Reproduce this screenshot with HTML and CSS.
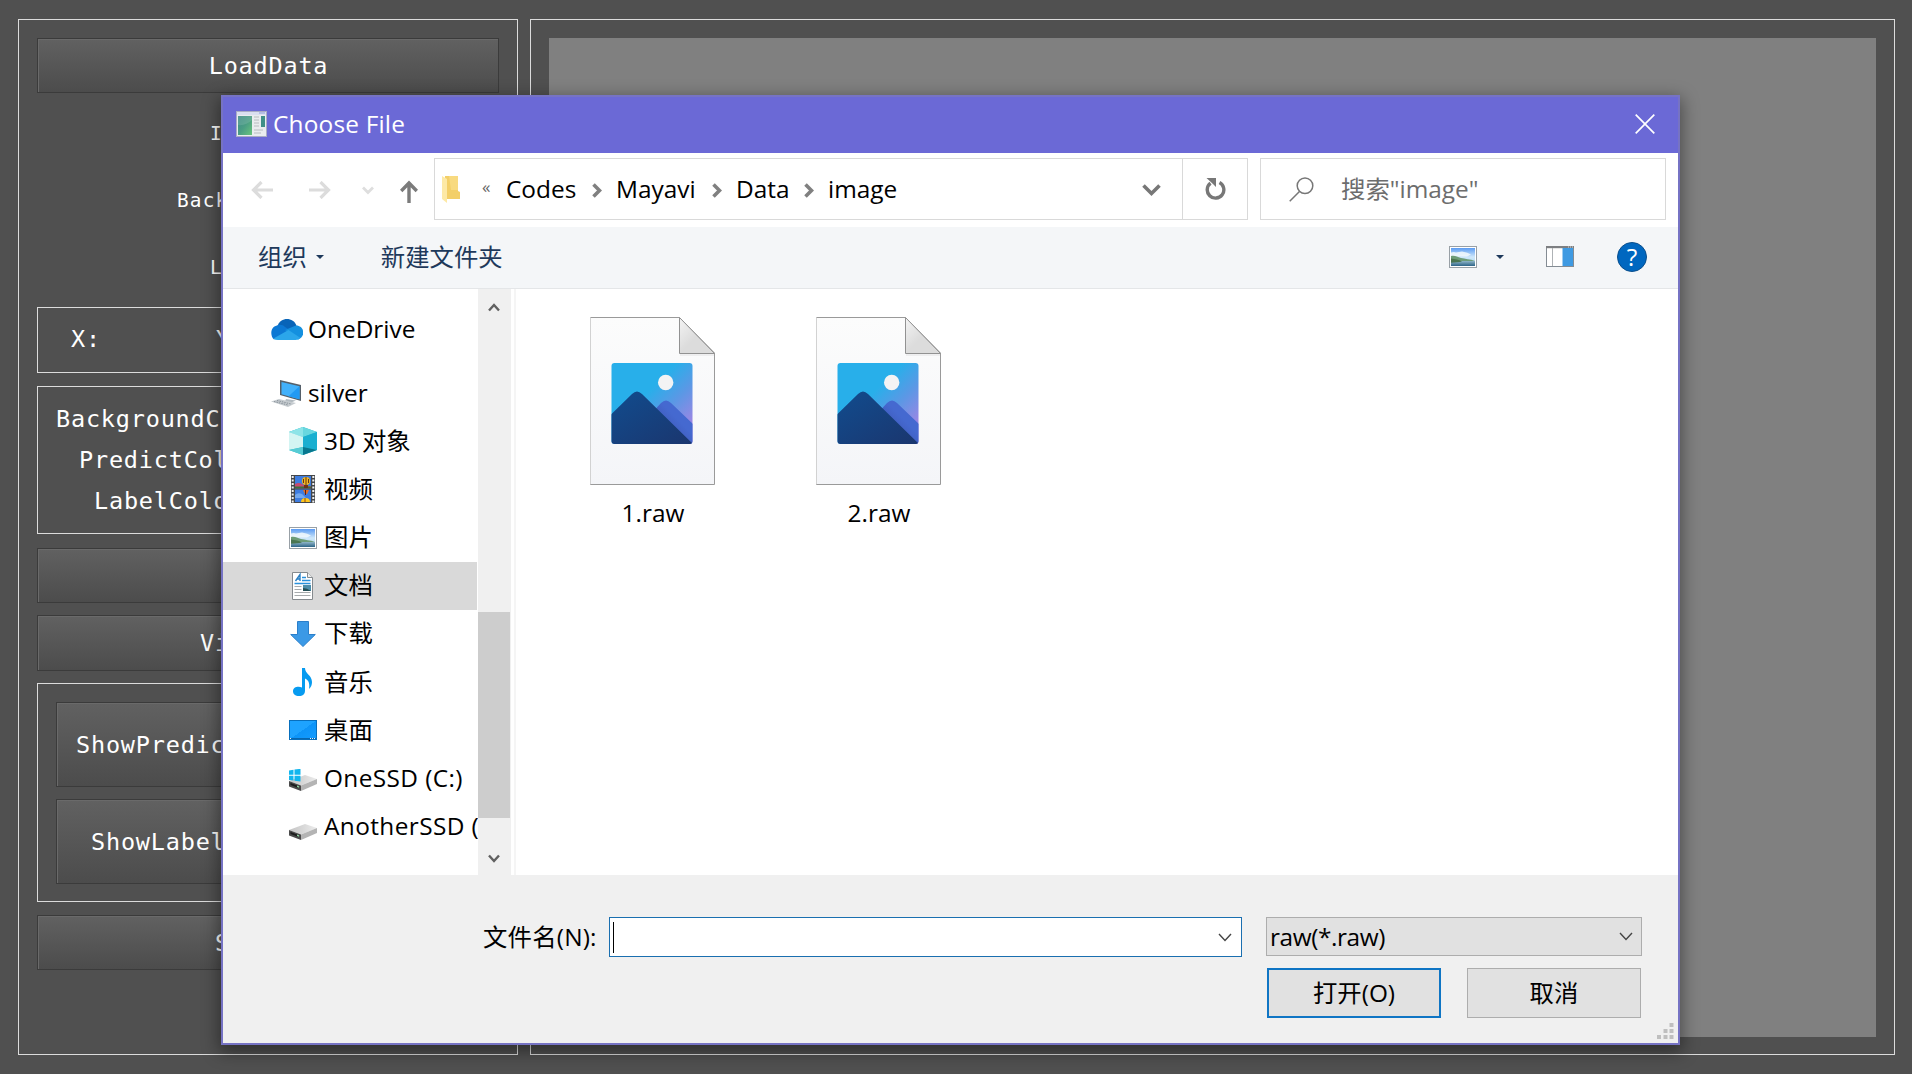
FILE: index.html
```html
<!DOCTYPE html>
<html lang="zh-CN">
<head>
<meta charset="utf-8">
<title>Choose File</title>
<link rel="stylesheet" href="styles.css">
</head>
<body>
<svg class="defs" width="0" height="0" aria-hidden="true">
  <defs>
    <linearGradient id="sky" x1="0" y1="0" x2="0" y2="1"><stop offset="0" stop-color="#5b9bf2"/><stop offset=".5" stop-color="#cfe8fb"/><stop offset="1" stop-color="#a9d3ec"/></linearGradient>
    <linearGradient id="sea" x1="0" y1="0" x2="0" y2="1"><stop offset="0" stop-color="#8fb5c8"/><stop offset="1" stop-color="#2d6487"/></linearGradient>
    <linearGradient id="paper" x1="0" y1="0" x2="0" y2="1"><stop offset="0" stop-color="#fcfcfc"/><stop offset="1" stop-color="#f4f5f8"/></linearGradient>
    <linearGradient id="fold" x1="0" y1="0" x2="1" y2="1"><stop offset="0" stop-color="#f4f4f4"/><stop offset=".5" stop-color="#dcdcdc"/></linearGradient>
    <linearGradient id="photo" x1="0" y1="0" x2="1" y2="1"><stop offset=".4" stop-color="#28afea"/><stop offset=".62" stop-color="#5b98e5"/><stop offset=".85" stop-color="#9a86e4"/></linearGradient>
    <linearGradient id="peak" x1="0" y1="0" x2="1" y2="1"><stop offset="0" stop-color="#114c8e"/><stop offset="1" stop-color="#1b356d"/></linearGradient>
    <linearGradient id="hill" x1="1" y1="0" x2="0" y2="1"><stop offset=".4" stop-color="#4569d0"/><stop offset=".8" stop-color="#3a50ac"/></linearGradient>
    <linearGradient id="drivetop" x1="0" y1="0" x2="1" y2="0"><stop offset="0" stop-color="#c4c4c4"/><stop offset="1" stop-color="#ececec"/></linearGradient>
    <linearGradient id="screen" x1="0" y1="0" x2="1" y2="1"><stop offset=".5" stop-color="#1ea3ff"/><stop offset=".5" stop-color="#0d94f8"/><stop offset="1" stop-color="#149cff"/></linearGradient>
    <linearGradient id="app" x1="0" y1="0" x2="1" y2="1"><stop offset="0" stop-color="#3d8a86"/><stop offset=".5" stop-color="#4a9d84"/><stop offset="1" stop-color="#69c47c"/></linearGradient>
    <clipPath id="photoclip"><rect x="21.500" y="46" width="81" height="81" rx="3"/></clipPath>
    <symbol id="landscape" viewBox="0 0 28 22">
      <rect x=".5" y=".5" width="27" height="21" fill="#fff" stroke="#98a0a6"/>
      <rect x="2" y="2" width="24" height="18" fill="url(#sky)"/>
      <path d="M2 6.500q3-1 5 0l6-1q6 1 9 3l-4 2H2z" fill="#f3f9fd" opacity=".85"/>
      <path d="M2 15h24v5H2z" fill="url(#sea)"/>
      <path d="M2 10c4-1 6 1 10 2s9 1 14 3H2z" fill="#6d9c78"/>
      <path d="M2 12.500c4 .5 8 1 11 3-3 .8-7 .8-11 1.300z" fill="#4a7550"/>
    </symbol>
    <symbol id="drive" viewBox="0 0 28 16">
      <path d="M0 6 16 0l12 4-16 6.500z" fill="url(#drivetop)"/>
      <path d="M0 6l12 4.500V16L0 11.500z" fill="#4a4a4a"/>
      <path d="M12 10.500 28 4v5L12 16z" fill="#b4b4b4"/>
      <path d="M1.500 8l8 3v2l-8-3z" fill="#1c1c1c"/><path d="M8 12l2 .7v-1.500l-2-.7z" fill="#8fd0a0"/>
    </symbol>
    <symbol id="picturefile" viewBox="0 0 126 168">
      <path d="M.5.500H89.500L124.500 36V167.500H.5z" fill="url(#paper)" stroke="#9a9a9a"/>
      <path d="M.5.500V167" stroke="#d2d2d2"/>
      <path d="M89.500.500 124.500 36.500H89.500z" fill="url(#fold)" stroke="#929292"/>
      <path d="M90 38h34" stroke="#e2e2e4"/>
      <g clip-path="url(#photoclip)">
        <path d="M21 46h82v82H21z" fill="url(#photo)"/>
        <circle cx="75.700" cy="65.500" r="7.700" fill="#f3f3f4"/>
        <path d="M60 98 71 86q5-5 10 0l24 23v20H60z" fill="url(#hill)"/>
        <path d="M21 97.500 42 77q5-5 10 0l53 52H21z" fill="url(#peak)"/>
      </g>
    </symbol>
  </defs>
</svg>

<main class="app">
  <section class="panel controls">
    <div class="push push-load">LoadData</div>
    <div class="caption caption-i">I</div>
    <div class="caption caption-b">Back</div>
    <div class="caption caption-l">L</div>
    <div class="group coords"><span>X:</span><span>Y</span></div>
    <div class="group colors">
      <div class="color-bg">BackgroundC</div>
      <div class="color-predict">PredictCol</div>
      <div class="color-label">LabelColo</div>
    </div>
    <div class="push push-blank"></div>
    <div class="push push-view">Vi</div>
    <div class="group toggles">
      <div class="push tall show-predict">ShowPredic</div>
      <div class="push tall show-label">ShowLabel</div>
    </div>
    <div class="push push-save">S</div>
  </section>
  <section class="panel viewer"><div class="canvas"></div></section>
</main>

<div class="dialog">
  <header class="titlebar">
    <svg class="app-icon" width="31" height="26" viewBox="0 0 31 26">
      <rect x=".5" y=".5" width="30" height="25" fill="#e9ecef" stroke="#a9adc4"/>
      <path d="M1 1h29v3H1z" fill="#dadff0"/><path d="M23 2h6" stroke="#8d9bd8"/>
      <rect x="2" y="5" width="14" height="19" fill="url(#app)"/><path d="M2 14Q10 15 16 9v-4H2z" fill="#fff" opacity=".12"/>
      <path d="M18 6h5M18 9h5M18 12h5M18 15h5M18 19h9M18 22h7" stroke="#b8bcc0"/>
      <rect x="25" y="5" width="4" height="11" fill="#3f8f88"/>
    </svg>
    <span class="title">Choose File</span>
    <svg class="close" width="20" height="20" viewBox="0 0 20 20"><path d="M.7.700l18.600 18.600M19.300.700.700 19.300" stroke="#fff" stroke-width="1.700"/></svg>
  </header>

  <nav class="navbar">
    <svg class="back" width="22" height="18" viewBox="0 0 22 18" fill="none" stroke="#dcdcdc" stroke-width="3.200"><path d="M22 9H3M10.500 1 2.500 9l8 8"/></svg>
    <svg class="forward" width="22" height="18" viewBox="0 0 22 18" fill="none" stroke="#dcdcdc" stroke-width="3.200"><path d="M0 9h19M11.500 1l8 8-8 8"/></svg>
    <svg class="recent" width="12" height="9" viewBox="0 0 12 9" fill="none" stroke="#dedede" stroke-width="2.800"><path d="M1 1.500l5 5 5-5"/></svg>
    <svg class="up" width="18" height="23" viewBox="0 0 18 23" fill="none" stroke="#7b7b7b" stroke-width="3.400"><path d="M9 23V3M1.200 11 9 3l7.800 8"/></svg>
    <div class="address">
      <svg class="folder" width="18" height="27" viewBox="0 0 18 27"><path d="M3 0h13v15l2 1v7H3z" fill="#f3cf68"/><path d="M7 0h9v14H9z" fill="#f8da80"/><path d="M0 0l5 3v24l-5-4z" fill="#fde9a6"/></svg>
      <span class="more">«</span>
      <span class="crumb crumb-codes">Codes</span>
      <svg class="sep" width="10" height="15" viewBox="0 0 10 15"><path d="M1.500 1.500l6 6-6 6" fill="none" stroke="#808080" stroke-width="3.600"/></svg>
      <span class="crumb crumb-mayavi">Mayavi</span>
      <svg class="sep" width="10" height="15" viewBox="0 0 10 15"><path d="M1.500 1.500l6 6-6 6" fill="none" stroke="#808080" stroke-width="3.600"/></svg>
      <span class="crumb crumb-data">Data</span>
      <svg class="sep" width="10" height="15" viewBox="0 0 10 15"><path d="M1.500 1.500l6 6-6 6" fill="none" stroke="#808080" stroke-width="3.600"/></svg>
      <span class="crumb crumb-image">image</span>
      <svg class="history" width="19" height="13" viewBox="0 0 19 13"><path d="M1.500 1.500l8 8 8-8" fill="none" stroke="#777" stroke-width="3.600"/></svg>
      <span class="refresh"><svg width="21" height="22" viewBox="0 0 21 22"><path d="M14.500 4.500A8.300 8.300 0 1 1 5.500 5.200" fill="none" stroke="#777" stroke-width="3.400"/><path d="M1.500 0h9.500v9L8 6z" fill="#777"/></svg></span>
    </div>
    <div class="search">
      <svg width="25" height="25" viewBox="0 0 25 25" fill="none" stroke="#777" stroke-width="1.500"><circle cx="16" cy="8.700" r="7.800"/><path d="M10.700 14.300.700 24.300"/></svg>
      <span>搜索"image"</span>
    </div>
  </nav>

  <div class="toolbar">
    <span class="organize">组织</span>
    <i class="caret"></i>
    <span class="newfolder">新建文件夹</span>
    <svg class="view" width="28" height="22"><use href="#landscape"/></svg>
    <i class="caret"></i>
    <svg class="pane" width="28" height="21" viewBox="0 0 28 21"><rect x=".5" y=".5" width="27" height="20" fill="#fff" stroke="#848c94"/><path d="M0 0h28v2.200H0z" fill="#7d7f82"/><path d="M22 1h5" stroke="#ddd" stroke-dasharray="1 1"/><path d="M6.500 2v18" stroke="#aeb2b5"/><path d="M16.500 2H27v18H16.500z" fill="#3f9ae2"/></svg>
    <span class="help">?</span>
  </div>

  <div class="browser">
    <div class="tree">
      <div class="node root first"><span class="glyph"><svg width="32" height="21" viewBox="0 0 32 21"><path d="M6 8C8 2 12 0 16 0s8 2 9.500 7L17 12z" fill="#0864b8"/><path d="M6 6.500C9 5 12 6 14 8l7 4.500L3 20.500C-1 17-1 8 6 6.500z" fill="#0c78d4"/><path d="M25 6.500c9 0 9.500 12 2 14L14 11z" fill="#1490df"/><path d="M2.500 19.500 17.500 11l12 8q-1.500 2-5 2H7q-3 0-4.500-1.500z" fill="#2ba6ea"/></svg></span>OneDrive</div>
      <div class="node root"><span class="glyph pc"><svg width="31" height="27" viewBox="0 0 31 27"><path d="M9 0l21 5v16L9 15z" fill="#55606a"/><path d="M10.500 2 28.500 6.300v12.900l-18-5z" fill="#42b1fb"/><path d="M28.500 6.300v12.900l-11-3z" fill="#229af3"/><path d="M15 19l10 1.500-6 2.500-5-1.500z" fill="#b2bac0"/><path d="M0 21.500l8-2.500 17 4-8 4z" fill="#c5cbcf"/><path d="M3 21.500l14 3.500M6 20.500l14 3.500" stroke="#89929a" stroke-dasharray="1.500 1"/></svg></span>silver</div>
      <div class="node"><span class="glyph"><svg width="28" height="28" viewBox="0 0 28 28"><path d="M14 0l14 5v18l-14 5L0 23V5z" fill="#25b9cb"/><path d="M0 5l14-5 14 5-14 5z" fill="#68d7df"/><path d="M14 0v10L0 5z" fill="#8de4e8"/><path d="M0 5l14 5v10L0 23z" fill="#d3f5f3"/><path d="M0 23l14-3v8z" fill="#57ccd4"/><path d="M14 10l14-5v18l-14-3z" fill="#1aafd0"/><path d="M14 20l14 3-14 5z" fill="#08788f"/></svg></span>3D 对象</div>
      <div class="node"><span class="glyph"><svg width="24" height="28" viewBox="0 0 24 28"><path d="M0 0h24v28H0z" fill="#44474a"/><path d="M1.700 1v27M22.300 1v27" stroke="#f0f0f0" stroke-width="2" stroke-dasharray="2 1.500"/><path d="M4 1h16v12.300H4zM4 14.500h16V27H4z" fill="#3e7de0"/><path d="M4 9q4-2 7 0t9 2v2.300H4z" fill="#c8486f"/><path d="M4 20q3-3 7-1l4 4H4z" fill="#72a8ee"/><path d="M4 11.500h16v1.800H4z" fill="#37733c"/><circle cx="15" cy="6" r="4" fill="#f3b61f"/><path d="M15 2v8M12.500 4v4M17.500 4v4" stroke="#623413"/><path d="M13 10h4v3h-4z" fill="#6b3216"/><path d="M12 15h6l-2 4h-2z" fill="#e56d22"/><path d="M14.500 15v5" stroke="#54201a"/><path d="M10 27q0-4 4.500-4t4.500 4z" fill="#ffc61d"/><path d="M14 23v4" stroke="#8e4b10"/></svg></span>视频</div>
      <div class="node"><span class="glyph"><svg width="28" height="22"><use href="#landscape"/></svg></span>图片</div>
      <div class="node selected"><span class="glyph doc"><svg width="21" height="28" viewBox="0 0 21 28"><path d="M.5.500h15l5 5v22H.5z" fill="#fff" stroke="#858a8e"/><path d="M15.500.500v5h5" fill="#eee" stroke="#858a8e"/><path d="M3.500 9 8 2.500V9M5 7h3" fill="none" stroke="#287fc4" stroke-width="1.400"/><path d="M10 5.500h4M10 8.500h8.500M2.500 11.500h16" stroke="#2891dc" stroke-width="1.300"/><path d="M2.500 14.500h7M2.500 17.500h7M2.500 20.500h16M2.500 23.500h16" stroke="#a7abad"/><path d="M11 13h8v6h-8z" fill="#4c8daa"/><path d="M11 16q4 0 8 3h-8z" fill="#244f55"/></svg></span>文档</div>
      <div class="node"><span class="glyph"><svg width="26" height="26" viewBox="0 0 26 26"><path d="M7.500.500h11v13h6.800L13 25.500.7 13.500h6.800z" fill="#3b99e6" stroke="#2b7fca"/></svg></span>下载</div>
      <div class="node"><span class="glyph"><svg width="20" height="28" viewBox="0 0 20 28"><path d="M9 0h3c0 6 7 7 7 14 0 3-1 5-3 7 1-7-1-9-4-10.500V23c0 7-12 6.500-12 .5C0 19 5 18 9 19.500z" fill="#079bf0"/></svg></span>音乐</div>
      <div class="node"><span class="glyph"><svg width="28" height="20" viewBox="0 0 28 20"><rect x=".5" y=".5" width="27" height="19" fill="url(#screen)" stroke="#086fbd"/><path d="M1 18.500h26" stroke="#0867b0"/><path d="M1 18.500h2M21 18.500h6" stroke="#e9f6ff" stroke-dasharray="1 1"/></svg></span>桌面</div>
      <div class="node wide"><span class="glyph cdrive"><svg width="28" height="22" viewBox="0 0 28 22"><svg y="6" width="28" height="16"><use href="#drive"/></svg><path d="M0 1.500l4.500-.7v4.900H0zM5.500.600 11.500-.200v5.900h-6zM0 6.700h4.500v4.900L0 11zM5.500 6.700h6v5.900l-6-.8z" fill="#12b6ee"/></svg></span>OneSSD (C:)</div>
      <div class="node wide"><span class="glyph low"><svg width="28" height="16"><use href="#drive"/></svg></span>AnotherSSD (</div>
    </div>
    <div class="scrollbar">
      <svg width="12" height="10" viewBox="0 0 12 10"><path d="M1 8.500l5-5.500 5 5.500" fill="none" stroke="#606060" stroke-width="2.400"/></svg>
      <div class="thumb"></div>
      <svg width="12" height="10" viewBox="0 0 12 10"><path d="M1 1.500 6 7l5-5.500" fill="none" stroke="#606060" stroke-width="2.400"/></svg>
    </div>
    <div class="splitter"></div>
    <div class="files">
      <div class="file"><svg width="126" height="168"><use href="#picturefile"/></svg><span>1.raw</span></div>
      <div class="file"><svg width="126" height="168"><use href="#picturefile"/></svg><span>2.raw</span></div>
    </div>
  </div>

  <footer class="footer">
    <div class="name-row">
      <label class="name-label">文件名(N):</label>
      <div class="name-input"><i class="cursor"></i><svg width="14" height="9" viewBox="0 0 14 9"><path d="M1 1l6 6.500L13 1" fill="none" stroke="#444" stroke-width="1.400"/></svg></div>
      <div class="filter"><span>raw(*.raw)</span><svg width="14" height="9" viewBox="0 0 14 9"><path d="M1 1l6 6.500L13 1" fill="none" stroke="#444" stroke-width="1.400"/></svg></div>
    </div>
    <div class="actions">
      <div class="action primary">打开(O)</div>
      <div class="action">取消</div>
    </div>
    <svg class="grip" width="17" height="17" viewBox="0 0 17 17"><path d="M12.500 0h4v4h-4zM6.500 6h4v4h-4zM12.500 6h4v4h-4zM0 12h4v4H0zM6.500 12h4v4h-4zM12.500 12h4v4h-4z" fill="#bfbfbf"/></svg>
  </footer>
</div>
</body>
</html>
```
FILE: styles.css
```css
* { box-sizing: border-box; }
html, body { height: 100%; }
body {
  margin: 0;
  overflow: hidden;
  background: #505050;
  font: 24.4px/32px "Open Sans", "Noto Sans CJK SC", sans-serif;
  color: #000;
}
svg { display: block; flex: none; }
.defs { position: absolute; }

/* main window */
.app {
  display: flex;
  gap: 12px;
  height: 1074px;
  padding: 19px 17px 19px 18px;
  font: 23.5px/30px "DejaVu Sans Mono", monospace;
  letter-spacing: 0.8px;
  color: #fff;
}
.panel { border: 1px solid #dcdcdc; padding: 18px; }
.controls { width: 500px; display: flex; flex-direction: column; white-space: nowrap; }
.viewer { flex: 1; }
.canvas { height: 999px; background: #808080; }
.push {
  flex: none;
  height: 55px;
  border: 1px solid #3b3b3b;
  background: linear-gradient(#616161, #4c4c4c);
  box-shadow: inset 1px 1px #6a6a6a;
  line-height: 54px;
  text-align: center;
}
.push-load { padding-left: 1px; }
.caption { font-size: 19.4px; letter-spacing: 1.2px; height: 67px; line-height: 67px; }
.caption-i { padding-left: 173px; margin-top: 7px; }
.caption-b { padding-left: 140px; }
.caption-l { padding-left: 173px; }
.group { border: 1px solid #dcdcdc; }
.coords { height: 66px; margin-top: 6px; padding: 16px 0 0 33px; display: flex; gap: 115px; }
.colors { height: 148px; margin-top: 13px; padding-top: 12px; line-height: 41px; }
.color-bg { padding-left: 18px; }
.color-predict { padding-left: 41px; }
.color-label { padding-left: 56px; }
.push-blank { margin-top: 14px; }
.push-view { height: 56px; margin-top: 12px; text-align: left; padding-left: 162px; }
.toggles { height: 219px; margin-top: 12px; padding: 18px; display: flex; flex-direction: column; gap: 12px; }
.tall { height: 85px; line-height: 84px; text-align: left; }
.show-predict { padding-left: 19px; }
.show-label { padding-left: 34px; }
.push-save { margin-top: 13px; text-align: left; padding-left: 177px; }

/* file dialog window */
.dialog {
  position: absolute;
  left: 221px;
  top: 95px;
  width: 1459px;
  height: 950px;
  border: 2px solid #7673c4;
  background: #fff;
  box-shadow: 0 5px 16px 2px rgba(0, 0, 0, 0.42);
  display: flex;
  flex-direction: column;
}
.titlebar { height: 56px; background: #6b69d6; display: flex; align-items: center; padding: 0 23px 2px 13px; color: #fff; }
.title { margin: 0 auto 1px 6px; letter-spacing: 0.2px; }
.navbar { height: 74px; display: flex; align-items: center; padding: 0 0 2px 28px; }
.back, .recent { margin-top: 2px; }
.forward { margin: 2px 0 0 36px; }
.recent { margin-left: 31px; }
.up { margin: 5px 16px 0 26px; }
.address { width: 814px; height: 62px; border: 1px solid #d9d9d9; display: flex; align-items: center; padding-left: 7px; }
.more { font-size: 17px; color: #666; margin: 0 0 5px 22px; width: 24px; }
.crumb { white-space: nowrap; }
.sep { margin-top: 2px; }
.crumb-codes { width: 86px; }
.crumb-mayavi { width: 96px; margin-left: 14px; }
.crumb-data { width: 68px; margin-left: 14px; }
.crumb-image { margin-left: 14px; }
.history { margin: 3px 21px 0 auto; }
.refresh { width: 65px; height: 60px; border-left: 1px solid #d9d9d9; display: flex; align-items: center; justify-content: center; }
.search { width: 406px; height: 62px; margin-left: 12px; border: 1px solid #d9d9d9; display: flex; align-items: center; gap: 27px; padding-left: 28px; color: #6d6d6d; }
.toolbar { height: 62px; background: #f4f6f8; border-bottom: 1px solid #e4e6e8; display: flex; align-items: center; padding: 0 31px 2px 35px; color: #1e395b; }
.caret { border: 4px solid transparent; border-top-color: #1e395b; border-bottom: 0; }
.organize + .caret { margin-left: 9px; }
.newfolder { margin-left: 57px; margin-right: auto; }
.view { margin-right: 19px; }
.pane { margin: 0 43px 0 42px; }
.help { width: 30px; height: 30px; border-radius: 50%; background: #0067c0; border: 1px solid #0b4f8c; color: #fff; line-height: 27px; text-align: center; }

.browser { height: 586px; display: flex; }
.tree { width: 255px; overflow: hidden; white-space: nowrap; padding-top: 17px; }
.node { width: 254px; height: 48.15px; display: flex; align-items: center; padding: 0 0 1px 60px; }
.node.root { padding-left: 44px; }
.node.first { margin-bottom: 15px; padding-bottom: 3px; }
.wide { letter-spacing: 0.4px; }
.selected { background: #d9d9d9; }
.glyph { flex: none; width: 40px; padding-top: 1px; margin-right: 1px; display: flex; justify-content: center; }
.pc { padding-right: 2px; }
.doc { padding-right: 1px; }
.cdrive { padding-top: 5px; }
.low { padding-top: 12px; }
.scrollbar { width: 33px; background: #f0f0f0; display: flex; flex-direction: column; align-items: center; padding: 13px 1px 11px 0; }
.thumb { width: 32px; height: 206px; margin: 300px 0 auto; background: #cdcdcd; }
.splitter { width: 5px; border-right: 2px solid #f5f5f5; }
.files { flex: 1; display: flex; gap: 100px; padding: 28px 0 0 74px; }
.file { width: 126px; display: flex; flex-direction: column; align-items: center; gap: 12px; }

.footer { flex: 1; background: #f0f0f0; position: relative; padding-top: 42px; }
.name-row { display: flex; padding-left: 260px; }
.name-label { width: 126px; white-space: nowrap; padding-top: 4px; letter-spacing: 0.2px; }
.name-input { width: 633px; height: 40px; border: 1px solid #1a6fb0; background: #fff; display: flex; align-items: center; justify-content: space-between; padding: 0 9px 0 3px; }
.cursor { width: 1px; height: 31px; background: #000; }
.filter { width: 376px; height: 39px; margin-left: 24px; border: 1px solid #adadad; background: #e1e1e1; display: flex; align-items: center; justify-content: space-between; padding: 0 8px 0 3px; letter-spacing: -0.4px; }
.actions { display: flex; gap: 26px; padding: 11px 0 0 1044px; }
.action { width: 174px; height: 50px; border: 1px solid #adadad; background: #e1e1e1; text-align: center; line-height: 48px; }
.primary { border: 2px solid #0f75c4; line-height: 46px; }
.grip { position: absolute; right: 4px; bottom: 3px; }
```
